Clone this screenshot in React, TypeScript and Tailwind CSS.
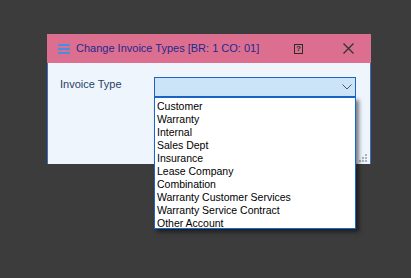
const items = [
  "Customer",
  "Warranty",
  "Internal",
  "Sales Dept",
  "Insurance",
  "Lease Company",
  "Combination",
  "Warranty Customer Services",
  "Warranty Service Contract",
  "Other Account",
];

function Grip() {
  // size grip dots in the bottom-right corner
  const dots = [
    [6, 0],
    [3, 3],
    [6, 3],
    [0, 6],
    [3, 6],
    [6, 6],
  ];
  return (
    <svg width="9" height="9" className="absolute right-[2px] bottom-[1px]">
      {dots.map(([x, y], i) => (
        <rect key={i} x={x} y={y} width="2" height="2" fill="#a9b3c0" />
      ))}
    </svg>
  );
}

export default function App() {
  return (
    <div className="relative w-[411px] h-[278px] bg-[#3c3c3c] overflow-hidden font-['Liberation_Sans',sans-serif]">
      <div className="absolute left-[47px] top-[34px] w-[324px] flex flex-col">
        <div className="h-[29px] bg-[#dc6f8f] flex items-center pl-[11px] pr-[17px]">
          <div className="flex flex-col gap-[2px] w-[12px]">
            <span className="h-[2px] bg-[#4a8ee0]" />
            <span className="h-[2px] bg-[#4a8ee0]" />
            <span className="h-[2px] bg-[#4a8ee0]" />
          </div>
          <span className="ml-[6px] text-[11px] text-[#1d2a8f]">
            Change Invoice Types [BR: 1 CO: 01]
          </span>
          <div className="ml-auto mr-[40px] w-[9px] h-[10px] border border-[#2b2b2b] flex items-center justify-center text-[8px] leading-none font-bold text-[#2b2b2b]">
            ?
          </div>
          <svg width="11" height="11" viewBox="0 0 11 11">
            <path d="M0.5 0.5 L10.5 10.5 M10.5 0.5 L0.5 10.5" stroke="#333" strokeWidth="1.3" />
          </svg>
        </div>
        <div className="relative h-[101px] bg-[#eef5fd] border-x border-[#3b6fc1] pt-[14px] pl-[12px]">
          <div className="flex items-start">
            <span className="w-[94px] leading-[14px] text-[11px] text-[#2a3f66]">Invoice Type</span>
            <div className="w-[202px] h-[20px] bg-[#cce4f7] border border-[#1f64b8] flex items-center justify-end pr-[3px]">
              <svg width="10" height="6" viewBox="0 0 10 6">
                <path d="M0.5 0.5 L5 5 L9.5 0.5" stroke="#555" strokeWidth="1" fill="none" />
              </svg>
            </div>
          </div>
          <Grip />
        </div>
      </div>
      <div className="absolute left-[154px] top-[97px] w-[202px] h-[132px] bg-white border border-[#1567d3] shadow-[3px_3px_4px_rgba(0,0,0,0.5)] flex flex-col pl-[2px] pt-[2px]">
        {items.map((t) => (
          <div key={t} className="h-[13px] shrink-0 leading-[13px] text-[10.5px] text-black">
            {t}
          </div>
        ))}
      </div>
    </div>
  );
}
